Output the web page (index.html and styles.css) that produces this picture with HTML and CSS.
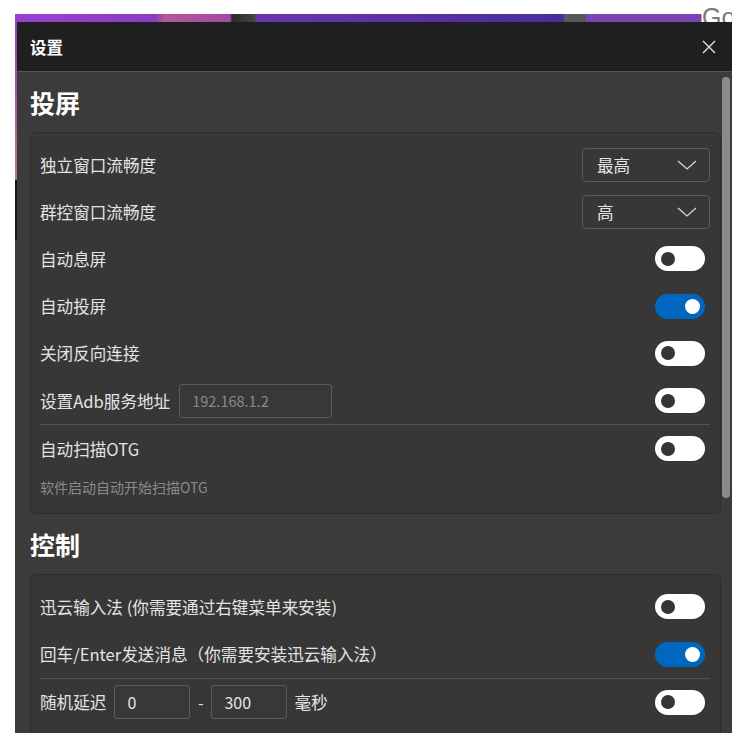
FILE: index.html
```html
<!DOCTYPE html>
<html lang="zh-CN">
<head>
    <meta charset="UTF-8">
    <title>设置</title>
    <link rel="stylesheet" href="styles.css">
</head>
<body>
    <div class="backdrop">
        <div class="appbar"><span class="app-go">Go</span></div>
        <div class="window">
            <div class="app-edge"></div>
            <div class="dialog">
                <div class="titlebar">
                    <span class="title">设置</span>
                    <svg class="close" width="14" height="14" viewBox="0 0 14 14">
                        <path d="M1 1 L13 13 M13 1 L1 13" stroke="#e2e2e2" stroke-width="1.4" fill="none"/>
                    </svg>
                </div>
                <div class="body">
                    <div class="scroll">
                        <h2 class="section">投屏</h2>
                        <div class="card">
                            <div class="row">
                                <span class="label">独立窗口流畅度</span>
                                <div class="select">
                                    <span>最高</span>
                                    <svg class="chevron" width="20" height="10" viewBox="0 0 20 10"><path d="M1 1 L10 9 L19 1" stroke="#d6d6d6" stroke-width="1.3" fill="none"/></svg>
                                </div>
                            </div>
                            <div class="row">
                                <span class="label">群控窗口流畅度</span>
                                <div class="select">
                                    <span>高</span>
                                    <svg class="chevron" width="20" height="10" viewBox="0 0 20 10"><path d="M1 1 L10 9 L19 1" stroke="#d6d6d6" stroke-width="1.3" fill="none"/></svg>
                                </div>
                            </div>
                            <div class="row">
                                <span class="label">自动息屏</span>
                                <div class="toggle"><span class="knob"></span></div>
                            </div>
                            <div class="row">
                                <span class="label">自动投屏</span>
                                <div class="toggle on"><span class="knob"></span></div>
                            </div>
                            <div class="row">
                                <span class="label">关闭反向连接</span>
                                <div class="toggle"><span class="knob"></span></div>
                            </div>
                            <div class="row">
                                <span class="label">设置Adb服务地址</span>
                                <input class="field field-adb" type="text" placeholder="192.168.1.2">
                                <div class="toggle"><span class="knob"></span></div>
                            </div>
                            <div class="group">
                                <div class="row">
                                    <span class="label">自动扫描OTG</span>
                                    <div class="toggle"><span class="knob"></span></div>
                                </div>
                                <div class="hint">软件启动自动开始扫描OTG</div>
                            </div>
                        </div>

                        <h2 class="section">控制</h2>
                        <div class="card">
                            <div class="row">
                                <span class="label">迅云输入法 (你需要通过右键菜单来安装)</span>
                                <div class="toggle"><span class="knob"></span></div>
                            </div>
                            <div class="row">
                                <span class="label">回车/Enter发送消息（你需要安装迅云输入法）</span>
                                <div class="toggle on"><span class="knob"></span></div>
                            </div>
                            <div class="group">
                                <div class="row">
                                    <span class="label">随机延迟</span>
                                    <input class="field field-num" type="text" value="0">
                                    <span class="dash">-</span>
                                    <input class="field field-num field-tight" type="text" value="300">
                                    <span class="label unit">毫秒</span>
                                    <div class="toggle"><span class="knob"></span></div>
                                </div>
                            </div>
                        </div>
                    </div>
                    <div class="scrollbar"><div class="thumb"></div></div>
                </div>
            </div>
        </div>
    </div>
</body>
</html>
```

FILE: styles.css
```css
body {
    margin: 0;
    background-color: #ffffff;
    font-family: "Noto Sans CJK SC", "Microsoft YaHei", sans-serif;
    color: #e4e4e4;
}
.backdrop {
    margin-left: 15px;
    width: 717px;
}

/* app that sits behind the dialog */
.appbar {
    height: 22px;
    display: flex;
    justify-content: flex-end;
    overflow: hidden;
    background: linear-gradient(to right,
        #9a41d2 0, #8b3cc2 140px, #b45894 150px, #a04aa6 215px,
        #2b2b2b 217px, #454545 240px, #6a35ae 241px, #4b2c9a 548px,
        #5a5a5a 550px, #555555 570px, #7b45b5 571px, #7b45b5 686px,
        transparent 687px) left bottom / 100% 8px no-repeat;
}
.app-go {
    width: 30px;
    font-family: "Liberation Sans", sans-serif;
    font-size: 25px;
    line-height: 34px;
    color: #7a7a7a;
    white-space: nowrap;
}
.window {
    display: flex;
    height: 711px;
}
.app-edge {
    width: 2px;
    background: linear-gradient(to bottom, #8e3dc6 0, #c67186 158px, #161616 158px, #161616 218px, #3a3a3a 218px);
}

.dialog {
    flex: 1;
    display: flex;
    flex-direction: column;
    background-color: #3b3b3b;
    overflow: hidden;
}
.titlebar {
    height: 49px;
    flex-shrink: 0;
    display: flex;
    align-items: center;
    padding: 0 16px 0 13px;
    background-color: #1f1f1f;
    border-bottom: 1px solid #555555;
}
.title {
    font-size: 16.5px;
    font-weight: 700;
    color: #ffffff;
}
.close {
    margin-left: auto;
}

.body {
    flex: 1;
    display: flex;
    min-height: 0;
}
.scroll {
    flex: 1;
    padding-left: 13px;
}
.scrollbar {
    width: 11px;
    flex-shrink: 0;
}
.thumb {
    margin: 5px 0 0 1px;
    width: 8px;
    height: 421px;
    border-radius: 4px;
    background-color: #8a8a8a;
}

.section {
    margin: 0;
    height: 60px;
    line-height: 60px;
    font-size: 25px;
    font-weight: 700;
    color: #ffffff;
}
.card {
    background-color: #373737;
    border: 1px solid #2d2d2d;
    border-radius: 6px;
    padding: 8px 10px 16px 9px;
}
.row {
    height: 47.2px;
    display: flex;
    align-items: center;
}
.label {
    font-size: 16.6px;
    color: #e4e4e4;
    white-space: nowrap;
}
.group {
    border-top: 1px solid #525252;
}
.hint {
    margin-top: 5px;
    font-size: 14px;
    line-height: 20px;
    color: #8a8a8a;
}

.select {
    margin-left: auto;
    width: 128px;
    height: 34px;
    box-sizing: border-box;
    display: flex;
    align-items: center;
    justify-content: space-between;
    padding: 0 12px 0 14px;
    border: 1px solid #5b5b5b;
    border-radius: 4px;
    font-size: 16.6px;
    color: #e4e4e4;
}

.toggle {
    margin-left: auto;
    margin-right: 5px;
    width: 50px;
    height: 25px;
    box-sizing: border-box;
    display: flex;
    align-items: center;
    padding: 0 5px 0 6px;
    border-radius: 13px;
    background-color: #ffffff;
}
.knob {
    width: 14px;
    height: 14px;
    border-radius: 50%;
    background-color: #353535;
}
.toggle.on {
    justify-content: flex-end;
    background-color: #0067c0;
}
.toggle.on .knob {
    width: 15px;
    height: 15px;
    background-color: #ffffff;
}

.field {
    height: 34px;
    box-sizing: border-box;
    margin: 0 0 0 9px;
    padding: 0 12px;
    border: 1px solid #5b5b5b;
    border-radius: 3px;
    background-color: #383838;
    font-family: inherit;
    font-size: 16px;
    color: #e4e4e4;
    outline: none;
}
.field::placeholder {
    color: #8a8a8a;
}
.field-adb {
    width: 153px;
    font-size: 14.5px;
}
.field-num {
    width: 76px;
    margin-left: 8px;
}
.field-tight {
    margin-left: 0;
}
.dash {
    width: 21px;
    text-align: center;
    font-size: 16px;
    color: #e4e4e4;
}
.unit {
    margin-left: 7px;
}
```
